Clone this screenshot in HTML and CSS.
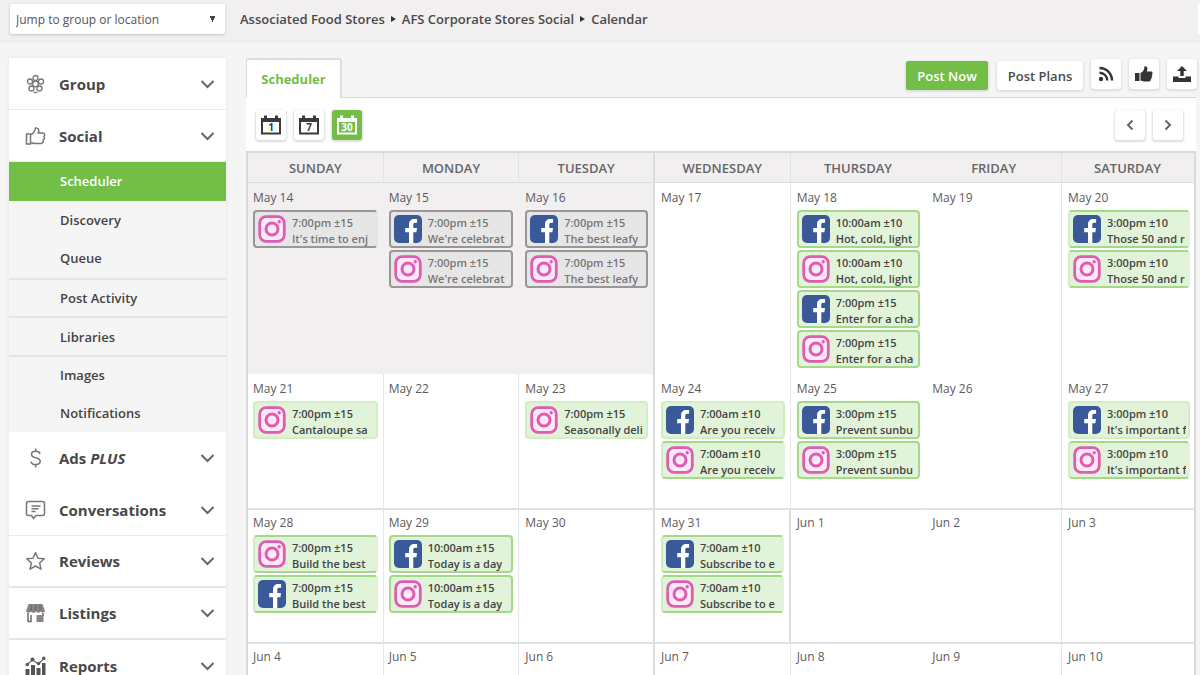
FILE: index.html
```html
<!DOCTYPE html>
<html lang="en">
<head>
<meta charset="utf-8">
<meta name="viewport" content="width=device-width, initial-scale=1">
<title>Scheduler</title>
<link rel="stylesheet" href="styles.css">
</head>
<body>
<svg class="sprite" aria-hidden="true">
  <symbol id="ig" viewBox="0 0 28 28">
    <rect x="1.7" y="1.7" width="24.6" height="24.6" rx="6.5" fill="#fbeaf5" stroke="#dd5cb4" stroke-width="2.8"/>
    <circle cx="14" cy="14" r="6" fill="none" stroke="#dd5cb4" stroke-width="3"/>
    <circle cx="21.2" cy="6.8" r="1.7" fill="#dd5cb4"/>
  </symbol>
  <symbol id="fb" viewBox="0 0 28 28">
    <rect width="28" height="28" rx="5" fill="#3a5998"/>
    <path d="M15 28V17.2h-3.8v-4.3H15V9.700C15 6 17.200 4 20.500 4c1.300 0 2.300.1 2.600.15v3.700h-1.900c-1.500 0-1.900.8-1.900 2v3.050h3.700l-.6 4.300h-3.100V28z" fill="#fff"/>
  </symbol>
  <symbol id="chev" viewBox="0 0 14 10"><path d="M1 2l6 6 6-6" fill="none" stroke="#666" stroke-width="2"/></symbol>
  <symbol id="cal" viewBox="0 0 22 22">
    <path d="M2 6h18v13.500H2z" fill="none" stroke="currentColor" stroke-width="2"/>
    <path d="M1 4h20v4H1zM4 1.500h3V5H4zM15 1.500h3V5h-3z" fill="currentColor"/>
  </symbol>
</svg>

<header class="topbar">
  <select class="jump" aria-label="Jump to group or location"><option>Jump to group or location</option></select>
  <nav class="crumbs" aria-label="Breadcrumb">
    <a href="#">Associated Food Stores</a><i class="sep"></i><a href="#">AFS Corporate Stores Social</a><i class="sep"></i><a href="#">Calendar</a>
  </nav>
  <span class="topbar-edge"></span>
</header>

<div class="layout">
  <nav class="sidebar" aria-label="Main">
    <button class="item"><svg class="icon" viewBox="0 0 20 20"><g fill="none" stroke="#777" stroke-width="1.300"><circle cx="10" cy="10" r="2.800"/><circle cx="10" cy="4" r="2.500"/><circle cx="15.500" cy="7.500" r="2.500"/><circle cx="14" cy="14.500" r="2.500"/><circle cx="6" cy="14.500" r="2.500"/><circle cx="4.500" cy="7.500" r="2.500"/><path d="M8 18.500h4"/></g></svg><span>Group</span><svg class="chev"><use href="#chev"/></svg></button>
    <button class="item"><svg class="icon" viewBox="0 0 20 20"><path d="M1 8h4v10H1zM5 9c3-1.500 4.500-3.500 5-7 3-.5 4 2 2.700 5H17c3 0 2 3 1.500 3.500 1 1.500.3 3-.8 3.500.3 1.500-.5 3-2 3.500H9c-2 0-2-1-4-1" fill="none" stroke="#777" stroke-width="1.500"/></svg><span>Social</span><svg class="chev"><use href="#chev"/></svg></button>
    <div class="submenu">
      <a class="active" href="#">Scheduler</a>
      <a href="#">Discovery</a>
      <a href="#">Queue</a>
      <a class="ruled" href="#">Post Activity</a>
      <a class="ruled" href="#">Libraries</a>
      <a class="ruled" href="#">Images</a>
      <a href="#">Notifications</a>
    </div>
    <button class="item plain"><svg class="icon" viewBox="0 0 20 20"><path d="M14.500 6c-.5-2-2-2.700-4.300-2.700C7.500 3.300 6 4.700 6 6.500c0 4.500 8.700 2 8.700 6.800 0 2-1.700 3.300-4.500 3.300-2.700 0-4.300-1-4.700-3M10.200.5v3M10.200 16.500v3" fill="none" stroke="#777" stroke-width="1.600"/></svg><span>Ads <em>PLUS</em></span><svg class="chev"><use href="#chev"/></svg></button>
    <button class="item"><svg class="icon" viewBox="0 0 20 20"><path d="M3 1.500h14q2 0 2 2v10q0 2-2 2h-6.500L8 18.500l-2-3H3q-2 0-2-2v-10q0-2 2-2zM6 6h9M6 8.700h7M6 11.400h4" fill="none" stroke="#777" stroke-width="1.500"/></svg><span>Conversations</span><svg class="chev"><use href="#chev"/></svg></button>
    <button class="item strong"><svg class="icon" viewBox="0 0 20 20"><path d="M10 1.500l2.500 5.700 6.300.6-4.700 4.200 1.400 6.200L10 15l-5.500 3.200L5.900 12 1.200 7.800l6.300-.6z" fill="none" stroke="#777" stroke-width="1.500" stroke-linejoin="round"/></svg><span>Reviews</span><svg class="chev"><use href="#chev"/></svg></button>
    <button class="item strong"><svg class="icon" viewBox="0 0 20 20"><path d="M3 1h14l2.500 7c-.5 2-3 2.300-4.300.5-1.200 1.700-3.500 1.700-4.700 0-1.200 1.700-3.700 1.700-5 0C4 10.300 1 10 .5 8z" fill="#8a8486"/><path d="M2.500 10v8.500M5.500 2v6M10 2v6M14.500 2v6M2 18.500h3.500V12M17.500 10v3" fill="none" stroke="#6f6a6c" stroke-width="1.500"/><path d="M11 12h7v7h-7z" fill="#8a8486"/></svg><span>Listings</span><svg class="chev"><use href="#chev"/></svg></button>
    <button class="item"><svg class="icon" viewBox="0 0 20 20"><path d="M0 13h4v7H0zM5.500 9h4v11h-4zM11 12h4v8h-4zM16.500 7H20v13h-3.500z" fill="#555"/><path d="M1.500 8.500L7 4l6 4 5-5" fill="none" stroke="#666" stroke-width="1.200"/><g fill="#555"><circle cx="1.800" cy="8.500" r="1.700"/><circle cx="7" cy="3.500" r="2"/><circle cx="13" cy="7.500" r="1.700"/><circle cx="18.300" cy="2.200" r="1.700"/></g></svg><span>Reports</span><svg class="chev"><use href="#chev"/></svg></button>
  </nav>

  <main class="main">
    <div class="head">
      <a class="tab" href="#">Scheduler</a>
      <div class="actions">
        <button class="btn primary">Post Now</button>
        <button class="btn">Post Plans</button>
        <button class="square" aria-label="Feeds"><svg width="16" height="16" viewBox="0 0 16 16"><path d="M1.500 2A12.500 12.500 0 0 1 14 14.500M1.500 6.700A7.800 7.800 0 0 1 9.300 14.500" fill="none" stroke="#333" stroke-width="2.400"/><circle cx="3" cy="13" r="2.200" fill="#333"/></svg></button>
        <button class="square" aria-label="Like"><svg width="18" height="16" viewBox="0 0 18 16"><path d="M0 7h4.500v8H0zM5.500 7C8 6 9.200 4 9.500.5c3-.8 3.500 2 2.300 5H16c2 0 2 2.200.8 2.700.9.900.6 2-.3 2.500.6 1 .2 2-.7 2.400.2 1.500-.6 2.400-2 2.400H9c-1.500 0-2-.8-3.500-1z" fill="#333"/></svg></button>
        <button class="square" aria-label="Upload"><svg width="18" height="16" viewBox="0 0 18 16"><path d="M9 0l5 5h-3.300v5H7.300V5H4zM0 10.500h5.500v1.500h7v-1.500H18V16H0z" fill="#333"/></svg></button>
      </div>
    </div>

    <section class="panel">
      <div class="tools">
        <div class="group">
          <button class="square" aria-label="Day view"><svg width="22" height="22"><use href="#cal"/><text x="11" y="17" class="caltext">1</text></svg></button>
          <button class="square" aria-label="Week view"><svg width="22" height="22"><use href="#cal"/><text x="11" y="17" class="caltext">7</text></svg></button>
          <button class="square on" aria-label="Month view"><svg width="22" height="22"><use href="#cal"/><text x="11" y="17" class="caltext">30</text></svg></button>
        </div>
        <div class="group">
          <button class="square" aria-label="Previous"><svg width="8" height="12" viewBox="0 0 8 12"><path d="M6.500 1.500L2 6l4.500 4.500" fill="none" stroke="#666" stroke-width="2"/></svg></button>
          <button class="square" aria-label="Next"><svg width="8" height="12" viewBox="0 0 8 12"><path d="M1.500 1.500L6 6l-4.500 4.500" fill="none" stroke="#666" stroke-width="2"/></svg></button>
        </div>
      </div>

      <table class="calendar">
        <thead>
          <tr><th>SUNDAY</th><th>MONDAY</th><th>TUESDAY</th><th>WEDNESDAY</th><th>THURSDAY</th><th>FRIDAY</th><th>SATURDAY</th></tr>
        </thead>
        <tbody>
          <tr class="tall">
            <td class="past"><time>May 14</time>
              <a class="event open" href="#"><svg><use href="#ig"/></svg><span>7:00pm ±15<br>It's time to enj</span></a></td>
            <td class="past"><time>May 15</time>
              <a class="event" href="#"><svg><use href="#fb"/></svg><span>7:00pm ±15<br>We're celebrat</span></a>
              <a class="event" href="#"><svg><use href="#ig"/></svg><span>7:00pm ±15<br>We're celebrat</span></a></td>
            <td class="past"><time>May 16</time>
              <a class="event" href="#"><svg><use href="#fb"/></svg><span>7:00pm ±15<br>The best leafy</span></a>
              <a class="event" href="#"><svg><use href="#ig"/></svg><span>7:00pm ±15<br>The best leafy</span></a></td>
            <td><time>May 17</time></td>
            <td><time>May 18</time>
              <a class="event" href="#"><svg><use href="#fb"/></svg><span>10:00am ±10<br>Hot, cold, light</span></a>
              <a class="event" href="#"><svg><use href="#ig"/></svg><span>10:00am ±10<br>Hot, cold, light</span></a>
              <a class="event" href="#"><svg><use href="#fb"/></svg><span>7:00pm ±15<br>Enter for a cha</span></a>
              <a class="event" href="#"><svg><use href="#ig"/></svg><span>7:00pm ±15<br>Enter for a cha</span></a></td>
            <td><time>May 19</time></td>
            <td><time>May 20</time>
              <a class="event open" href="#"><svg><use href="#fb"/></svg><span>3:00pm ±10<br>Those 50 and r</span></a>
              <a class="event open" href="#"><svg><use href="#ig"/></svg><span>3:00pm ±10<br>Those 50 and r</span></a></td>
          </tr>
          <tr>
            <td><time>May 21</time>
              <a class="event soft" href="#"><svg><use href="#ig"/></svg><span>7:00pm ±15<br>Cantaloupe sa</span></a></td>
            <td><time>May 22</time></td>
            <td><time>May 23</time>
              <a class="event soft" href="#"><svg><use href="#ig"/></svg><span>7:00pm ±15<br>Seasonally deli</span></a></td>
            <td><time>May 24</time>
              <a class="event soft" href="#"><svg><use href="#fb"/></svg><span>7:00am ±10<br>Are you receiv</span></a>
              <a class="event open" href="#"><svg><use href="#ig"/></svg><span>7:00am ±10<br>Are you receiv</span></a></td>
            <td><time>May 25</time>
              <a class="event" href="#"><svg><use href="#fb"/></svg><span>3:00pm ±15<br>Prevent sunbu</span></a>
              <a class="event" href="#"><svg><use href="#ig"/></svg><span>3:00pm ±15<br>Prevent sunbu</span></a></td>
            <td><time>May 26</time></td>
            <td><time>May 27</time>
              <a class="event soft" href="#"><svg><use href="#fb"/></svg><span>3:00pm ±10<br>It's important f</span></a>
              <a class="event open" href="#"><svg><use href="#ig"/></svg><span>3:00pm ±10<br>It's important f</span></a></td>
          </tr>
          <tr class="ruled">
            <td><time>May 28</time>
              <a class="event open" href="#"><svg><use href="#ig"/></svg><span>7:00pm ±15<br>Build the best</span></a>
              <a class="event open" href="#"><svg><use href="#fb"/></svg><span>7:00pm ±15<br>Build the best</span></a></td>
            <td><time>May 29</time>
              <a class="event" href="#"><svg><use href="#fb"/></svg><span>10:00am ±15<br>Today is a day</span></a>
              <a class="event" href="#"><svg><use href="#ig"/></svg><span>10:00am ±15<br>Today is a day</span></a></td>
            <td><time>May 30</time></td>
            <td class="month-end"><time>May 31</time>
              <a class="event open" href="#"><svg><use href="#fb"/></svg><span>7:00am ±10<br>Subscribe to e</span></a>
              <a class="event open" href="#"><svg><use href="#ig"/></svg><span>7:00am ±10<br>Subscribe to e</span></a></td>
            <td><time>Jun 1</time></td>
            <td><time>Jun 2</time></td>
            <td><time>Jun 3</time></td>
          </tr>
          <tr class="ruled">
            <td><time>Jun 4</time></td><td><time>Jun 5</time></td><td><time>Jun 6</time></td><td><time>Jun 7</time></td><td><time>Jun 8</time></td><td><time>Jun 9</time></td><td><time>Jun 10</time></td>
          </tr>
        </tbody>
      </table>
    </section>
  </main>
</div>
</body>
</html>
```
FILE: styles.css
```css
* { box-sizing: border-box; }
html { height: 100%; overflow: hidden; }
body {
  margin: 0;
  height: 100%;
  overflow: hidden;
  background: #f5f5f5;
  color: #4a4a4a;
  font-family: "Open Sans", "Noto Sans", sans-serif;
  font-size: 13px;
}
a { color: inherit; text-decoration: none; }
button { font: inherit; color: inherit; border: 0; background: #fff; padding: 0; }
.sprite { display: none; }

.topbar {
  display: flex;
  height: 43px;
  padding: 4px 0 0 10px;
  background: #f1eff0;
}
.jump {
  appearance: none;
  width: 215px;
  height: 30px;
  padding: 0 8px 0 6px;
  border: 0;
  border-radius: 2px;
  background: #fff conic-gradient(from -27deg at 50% 100%, #444 54deg, transparent 0) no-repeat right 9px center / 7px 6px;
  box-shadow: 0 1px 3px #c4c4c4;
  color: #555;
  font: 12px "Open Sans", sans-serif;
}
.crumbs { display: flex; align-items: center; height: 29px; margin-left: 15px; font-weight: 600; }
.sep { margin: 0 6px; border: solid transparent; border-width: 3px 0 3px 5px; border-left-color: #333; }
.topbar-edge { width: 2px; height: 30px; margin-left: auto; background: #fff; }

.layout { display: flex; align-items: flex-start; gap: 20px; padding: 15px 3px 0 9px; }

.sidebar { flex: 0 0 217px; background: #fff; box-shadow: 0 0 3px #e2e2e2; }
.item {
  display: flex;
  align-items: center;
  width: 100%;
  height: 52px;
  padding: 0 11px 0 16px;
  border-bottom: 1px solid #ebebeb;
  color: #484848;
  font-size: 15px;
  font-weight: 700;
  text-align: left;
}
.item.plain { border-bottom-color: #fff; }
.item.strong { border-bottom: 2px solid #e6e6e6; }
.item span { flex: 1; margin-left: 13px; }
.icon { width: 21px; height: 20px; }
.chev { width: 15px; height: 10px; }
.submenu { display: grid; grid-auto-rows: 1fr; height: 270px; background: #f5f5f5; }
.submenu a { display: flex; align-items: center; padding-left: 51px; color: #444; font-weight: 600; }
.submenu .ruled { border-top: 2px solid #e4e4e4; }
.submenu .active { background: #73be46; color: #fff; }

.main { flex: 1; min-width: 0; }
.head { display: flex; justify-content: space-between; align-items: flex-start; height: 39px; }
.tab {
  position: relative;
  height: 40px;
  width: 96px;
  border: solid #dcdcdc;
  border-width: 2px 2px 0 1px;
  border-radius: 3px 3px 0 0;
  background: #fff;
  color: #73be46;
  font-weight: 700;
  line-height: 38px;
  text-align: center;
}
.actions { display: flex; gap: 8px; }
.btn, .square { height: 30px; border-radius: 3px; box-shadow: 0 1px 2px 1px #dedede; }
.btn { margin-top: 3px; height: 29px; width: 86px; font-weight: 600; }
.primary { width: 82px; margin-right: 1px; background: #73be46; color: #fff; border-radius: 2px; }
.square { display: grid; place-items: center; width: 30px; margin-top: 1px; color: #3a3a3a; }
.on { background: #73be46; color: #fff; }

.panel { margin-right: 1px; border-top: 1px solid #d8d8d8; background: #fff; }
.tools { display: flex; justify-content: space-between; padding: 11px 13px 11px 10px; }
.group { display: flex; gap: 8px; }
.caltext { font-size: 10px; font-weight: 700; fill: currentColor; text-anchor: middle; }

.calendar {
  width: 100%;
  table-layout: fixed;
  border-collapse: separate;
  border-spacing: 0;
  border: solid #dadada;
  border-width: 2px 2px 0 2px;
}
th {
  height: 30px;
  padding: 0;
  border-right: 1px solid #e2e2e2;
  border-bottom: 1px solid #dcdcdc;
  background: #f1eff0;
  color: #666;
  font-weight: 600;
}
th:last-child { width: 132px; }
td { height: 134px; padding: 7px 5px 0 5px; border-right: 1px solid #e6e6e6; vertical-align: top; }
td:nth-child(n+3) { padding-left: 6px; }
td:last-child { padding-right: 3px; }
th:nth-child(5), td:nth-child(5), th:last-child, td:last-child { border-right-color: transparent; }
th:nth-child(3), td:nth-child(3) { border-right: 2px solid #dcdcdc; }
.tall td { height: 191px; }
.ruled td { padding-top: 5px; border-top: 2px solid #e0e0e0; }
td.past { border-right-color: #f1eff0; background: #f1eff0; }
td.past:nth-child(3) { border-right-color: #dcdcdc; }
td.month-end { border-right: 2px solid #dcdcdc; }
time { display: block; height: 20px; color: #5c5c5c; font-size: 12px; line-height: 16px; }

.event {
  display: flex;
  gap: 6px;
  height: 38px;
  margin-bottom: 2px;
  padding: 3px 2px 0 3px;
  overflow: hidden;
  border: 2px solid #a5d98a;
  border-radius: 4px;
  background: #e1f3d8;
  color: #444;
  font-size: 11px;
  font-weight: 600;
  line-height: 16px;
  white-space: nowrap;
}
.event svg { flex: none; width: 28px; height: 28px; }
.event span { overflow: hidden; }
.event.open { border-left-color: #d2edc3; border-right-color: #e1f3d8; }
.event.soft { border-color: #d2edc3; }
.past .event { background: #e6e6e6; border-color: #9a9596; color: #777; }
.past .event.open { border-right-color: #e6e6e6; }
```
